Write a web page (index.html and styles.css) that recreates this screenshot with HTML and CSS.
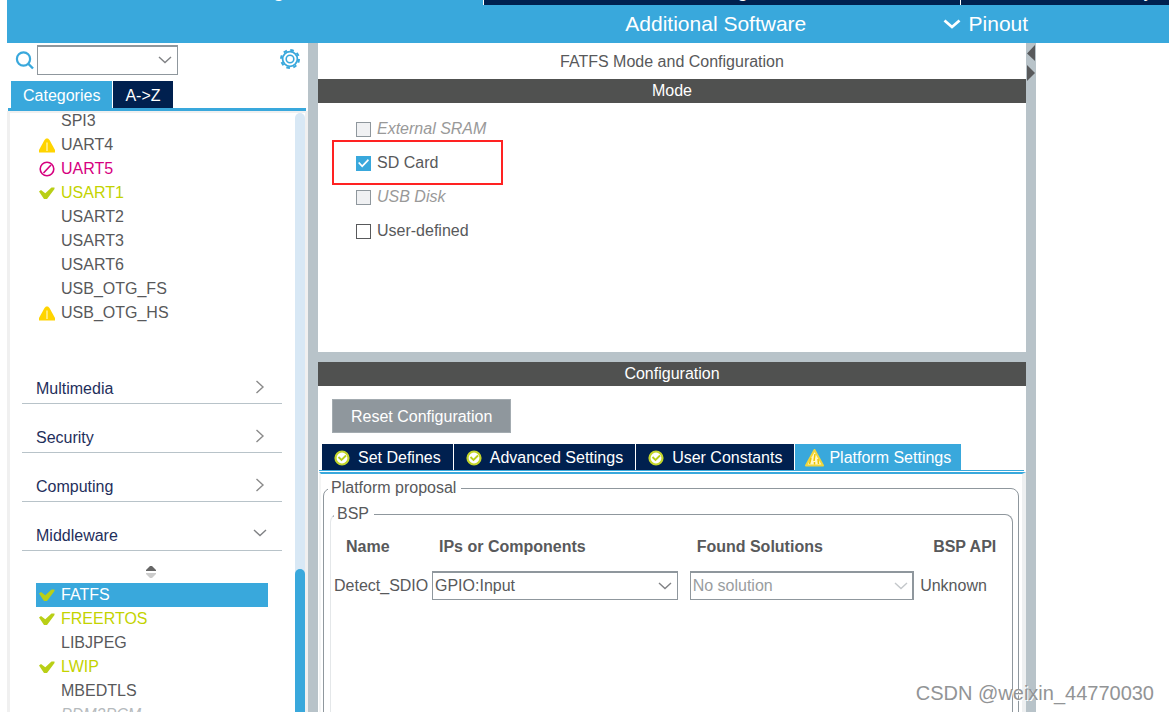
FILE: index.html
```html
<!DOCTYPE html>
<html lang="en">
<head>
<meta charset="utf-8">
<title>FATFS Mode and Configuration</title>
<link rel="stylesheet" href="styles.css">
</head>
<body>
<svg class="defs" aria-hidden="true">
  <symbol id="warn" viewBox="0 0 16 15"><path d="M7 0.500H9L10.500 2 L16 12 V14.500 H0 V12 L5.500 2Z" fill="#ffd400"/><path d="M8 4.500V13" stroke="#fff3a8" stroke-width="1.400"/></symbol>
  <symbol id="tick" viewBox="0 0 16 13"><path d="M0 4.500 L2 3 L6.300 6.300 L12.500 0.500 H15.500 V2 L8 12 H5Z" fill="#b9cf16"/></symbol>
  <symbol id="deny" viewBox="0 0 16 16"><circle cx="8" cy="8" r="6.800" fill="none" stroke="#d6007f" stroke-width="1.600"/><path d="M12 4 L4.500 12" stroke="#d6007f" stroke-width="1.600"/></symbol>
  <symbol id="right" viewBox="0 0 10 14"><path d="M1.500 1 L8 7 L1.500 13" fill="none" stroke="#8a8a8a" stroke-width="1.400"/></symbol>
  <symbol id="down" viewBox="0 0 14 8"><path d="M1 1 L7 6.500 L13 1" fill="none" stroke="currentColor" stroke-width="1.400"/></symbol>
  <symbol id="ok" viewBox="0 0 16 16"><circle cx="8" cy="8" r="6.500" fill="#fff" stroke="#c3d52a" stroke-width="2.200"/><path d="M4.500 7 L7.500 10 L12 5.500" fill="none" stroke="#b9cf16" stroke-width="1.800"/></symbol>
</svg>

<div class="views">
  <div class="view view-on"><span>Pinout &amp; Configuration</span></div>
  <div class="view"><span>Clock Configuration</span></div>
  <div class="view view-last"><span>Project Manager</span></div>
</div>
<header class="bar">
  <button class="bar-btn bar-soft" type="button">Additional Software</button>
  <button class="bar-btn bar-pin" type="button">
    <svg width="18" height="12" viewBox="0 0 18 12"><path d="M1.500 2.500 L9 9 L16.500 2.500" fill="none" stroke="#fff" stroke-width="2.800"/></svg>Pinout
  </button>
</header>

<div class="work">
  <aside class="side">
    <div class="search">
      <svg width="20" height="20" viewBox="0 0 20 20"><circle cx="8.500" cy="8" r="6.600" fill="none" stroke="#39a8dc" stroke-width="2.200"/><path d="M13 12.500 L18 17.500" stroke="#39a8dc" stroke-width="2.400"/></svg>
      <div class="pick pick-search">
        <select aria-label="Search"><option></option></select>
        <svg class="caret" width="14" height="8"><use href="#down"/></svg>
      </div>
      <button class="gear" type="button" aria-label="Settings">
        <svg width="22" height="22" viewBox="0 0 22 22" fill="none" stroke="#39a8dc"><circle cx="11" cy="11" r="9" stroke-width="2" stroke-dasharray="3.600 3.469"/><circle cx="11" cy="11" r="7.400" stroke-width="1.800"/><circle cx="11" cy="11" r="3.800" stroke-width="1.600"/></svg>
      </button>
    </div>
    <div class="tabs side-tabs" role="tablist">
      <button class="tab tab-on" type="button" role="tab" aria-selected="true">Categories</button>
      <button class="tab" type="button" role="tab">A-&gt;Z</button>
    </div>
    <div class="tree">
      <div class="tree-body">
        <ul class="items items-top">
          <li><i></i>SPI3</li>
          <li><i><svg width="16" height="15"><use href="#warn"/></svg></i>UART4</li>
          <li class="bad"><i><svg width="16" height="16"><use href="#deny"/></svg></i>UART5</li>
          <li class="good"><i><svg width="16" height="13"><use href="#tick"/></svg></i>USART1</li>
          <li><i></i>USART2</li>
          <li><i></i>USART3</li>
          <li><i></i>USART6</li>
          <li><i></i>USB_OTG_FS</li>
          <li><i><svg width="16" height="15"><use href="#warn"/></svg></i>USB_OTG_HS</li>
        </ul>
        <button class="cat" type="button">Multimedia<svg width="10" height="14"><use href="#right"/></svg></button>
        <button class="cat" type="button">Security<svg width="10" height="14"><use href="#right"/></svg></button>
        <button class="cat" type="button">Computing<svg width="10" height="14"><use href="#right"/></svg></button>
        <button class="cat cat-open" type="button">Middleware<svg width="14" height="8"><use href="#down"/></svg></button>
        <div class="sort"><svg width="10" height="12" viewBox="0 0 10 12"><path d="M0 5V4L4 0H6L10 4V5Z" fill="#666"/><path d="M0 7V8L4 12H6L10 8V7Z" fill="#ccc"/></svg></div>
        <ul class="items">
          <li class="sel"><i><svg width="16" height="13"><use href="#tick"/></svg></i>FATFS</li>
          <li class="good"><i><svg width="16" height="13"><use href="#tick"/></svg></i>FREERTOS</li>
          <li><i></i>LIBJPEG</li>
          <li class="good"><i><svg width="16" height="13"><use href="#tick"/></svg></i>LWIP</li>
          <li><i></i>MBEDTLS</li>
          <li class="off"><i></i>PDM2PCM</li>
        </ul>
      </div>
      <div class="track"><div class="thumb"></div></div>
    </div>
  </aside>

  <div class="split"></div>

  <main class="main">
    <h1 class="title">FATFS Mode and Configuration</h1>
    <h2 class="band">Mode</h2>
    <section class="modes">
      <label class="mode mode-off"><input type="checkbox" disabled>External SRAM</label>
      <label class="mode mode-marked"><input type="checkbox" checked>SD Card</label>
      <label class="mode mode-off"><input type="checkbox" disabled>USB Disk</label>
      <label class="mode"><input type="checkbox">User-defined</label>
    </section>
    <div class="hsplit"></div>
    <h2 class="band">Configuration</h2>
    <section class="config">
      <button class="reset" type="button">Reset Configuration</button>
      <div class="tabs config-tabs" role="tablist">
        <button class="tab" type="button" role="tab"><svg width="16" height="16"><use href="#ok"/></svg>Set Defines</button>
        <button class="tab" type="button" role="tab"><svg width="16" height="16"><use href="#ok"/></svg>Advanced Settings</button>
        <button class="tab" type="button" role="tab"><svg width="16" height="16"><use href="#ok"/></svg>User Constants</button>
        <button class="tab tab-on tab-warn" type="button" role="tab" aria-selected="true"><svg width="19" height="18" viewBox="0 0 19 18"><path d="M9.500 1 L18 16.500 H1Z" fill="#fff7c4" stroke="#f0d63c" stroke-width="2" stroke-linejoin="round"/><path d="M10 5L9 12M9.500 13V15.500M6 9L4.500 15M13 10L13.500 15" stroke="#ecc400" stroke-width="1.500"/></svg>Platform Settings</button>
      </div>
      <div class="pane">
        <fieldset class="group">
          <legend>Platform proposal</legend>
          <fieldset class="group group-in">
            <legend>BSP</legend>
            <table class="bsp">
              <colgroup><col class="c1"><col class="c2"><col class="c3"><col></colgroup>
              <thead><tr><th class="h-name">Name</th><th class="h-mid">IPs or Components</th><th class="h-mid">Found Solutions</th><th class="h-api">BSP API</th></tr></thead>
              <tbody><tr>
                <td>Detect_SDIO</td>
                <td class="cell-ip"><div class="pick"><select aria-label="IPs or Components"><option>GPIO:Input</option></select><svg class="caret" width="14" height="8"><use href="#down"/></svg></div></td>
                <td class="cell-sol"><div class="pick pick-off"><select aria-label="Found Solutions" disabled><option>No solution</option></select><svg class="caret" width="14" height="8"><use href="#down"/></svg></div></td>
                <td>Unknown</td>
              </tr></tbody>
            </table>
          </fieldset>
        </fieldset>
      </div>
    </section>
  </main>

  <div class="split split-right">
    <button type="button" aria-label="Collapse left"><svg width="8" height="16" viewBox="0 0 8 16"><path d="M8 0V16L0 8.500Z" fill="#58595b"/></svg></button>
    <button type="button" aria-label="Collapse right"><svg width="8" height="16" viewBox="0 0 8 16"><path d="M0 0V16L8 8Z" fill="#58595b"/></svg></button>
  </div>
  <div class="canvas"></div>
</div>
<div class="credit">CSDN @weixin_44770030</div>
</body>
</html>
```
FILE: styles.css
```css
* { box-sizing: border-box; }
body {
  margin: 0;
  padding-left: 7px;
  height: 100vh;
  overflow: hidden;
  position: relative;
  display: flex;
  flex-direction: column;
  background: #fff;
  color: #58595b;
  font: 16px/18px "Liberation Sans", Arial, sans-serif;
}
button, select, input { font: inherit; margin: 0; }
button { border: 0; padding: 0; background: none; color: inherit; }
svg { display: block; flex: none; }
.defs { display: none; }

/* top navigation */
.views { display: flex; flex: none; height: 5px; overflow: hidden; background: #39a8dc; }
.view {
  flex: 0 0 41%;
  display: flex;
  justify-content: center;
  align-items: flex-end;
  padding-bottom: 4px;
  background: #00204f;
  border-left: 1px solid #fff;
  color: #fff;
  font-size: 20px;
  line-height: 22px;
  white-space: nowrap;
}
.view-on { background: #39a8dc; border-left: 0; }
.view-last { flex-basis: 39%; }
.bar {
  flex: none;
  height: 38px;
  display: grid;
  grid-template-columns: 42% 38% 1fr;
  background: #39a8dc;
  color: #fff;
}
.bar-btn { font-size: 21px; line-height: 38px; }
.bar-soft { grid-column: 2; }
.bar-pin { display: flex; align-items: center; gap: 8px; padding-left: 6px; }

.work {
  flex: 1;
  min-height: 0;
  display: grid;
  grid-template-columns: 301px 10px minmax(0, 708fr) 10px minmax(0, 133fr);
  grid-template-rows: minmax(0, 1fr);
}
.split { background: #b8c3c9; }
.split-right { display: flex; flex-direction: column; align-items: center; gap: 4px; padding-top: 2px; }

/* category sidebar */
.side { display: flex; flex-direction: column; min-height: 0; }
.search { display: flex; align-items: flex-start; height: 38px; padding: 2px 7px 0 8px; gap: 2px; flex: none; }
.search > svg { margin-top: 6px; }
.gear { margin: 3px 0 0 auto; }
.pick { display: grid; align-items: center; color: #808285; }
.pick select, .pick .caret { grid-area: 1 / 1; }
.pick select {
  appearance: none;
  width: 100%;
  height: 29px;
  padding: 0 2px;
  border: 1px solid #8f979d;
  border-top-width: 2px;
  border-radius: 0;
  background: #fff;
  color: #58595b;
  opacity: 1;
}
.pick .caret { justify-self: end; margin-right: 6px; pointer-events: none; }
.pick-search { width: 141px; }
.pick-search select { height: 30px; }
.pick-off { color: #c4c8cb; }
.pick-off select { color: #999da0; border-right-width: 2px; }

.tabs { display: flex; gap: 1px; flex: none; }
.tab {
  display: flex;
  align-items: center;
  gap: 8px;
  height: 27px;
  padding: 2px 12px 0;
  background: #00204f;
  color: #fff;
  white-space: nowrap;
}
.tab-on { background: #39a8dc; }
.side-tabs { margin: 0 2px 0 1px; padding-left: 3px; border-bottom: 3px solid #39a8dc; }

.tree {
  flex: 1;
  min-height: 0;
  display: flex;
  overflow: hidden;
  border: 3px solid #f0f0f0;
  border-top-width: 2px;
  border-bottom: 0;
}
.tree-body { flex: 1; min-width: 0; overflow: hidden; }
.track { width: 10px; background: #d8e8f5; border-radius: 5px 5px 0 0; padding-top: 456px; display: flex; }
.thumb { flex: 1; background: #39a8dc; border-radius: 5px 5px 0 0; }
.items { list-style: none; margin: 0 27px 0 26px; padding: 0; }
.items-top { margin-top: -4px; margin-bottom: 30px; }
.items li { display: flex; align-items: center; height: 24px; padding-left: 3px; }
.items i { width: 22px; flex: none; }
.items .good { color: #c3d300; }
.items .bad { color: #d6007f; }
.items .sel { background: #39a8dc; color: #fff; }
.items .off { color: #b5babd; font-style: italic; }
.cat {
  display: flex;
  justify-content: space-between;
  align-items: center;
  width: calc(100% - 25px);
  height: 49px;
  margin-left: 12px;
  padding: 19px 17px 0 14px;
  border-bottom: 1px solid #b8c3c9;
  color: #1f2f5c;
}
.cat svg { margin-bottom: 4px; color: #808285; }
.cat-open { padding-right: 15px; }
.cat-open svg { margin-bottom: 6px; }
.sort { height: 32px; display: flex; justify-content: center; align-items: center; padding: 10px 3px 0 0; }

/* main panel */
.main { display: flex; flex-direction: column; min-height: 0; overflow: hidden; }
.title { margin: 0; padding-top: 1px; font-size: 16px; font-weight: 400; line-height: 35px; text-align: center; }
.band {
  margin: 0;
  background: #505150;
  color: #fff;
  font-size: 16px;
  font-weight: 400;
  line-height: 24px;
  text-align: center;
}
.modes { height: 249px; flex: none; padding: 9px 38px; }
.mode { display: flex; align-items: center; width: fit-content; height: 34px; gap: 6px; position: relative; }
.mode-off { font-style: italic; color: #999; }
.mode input {
  appearance: none;
  width: 15px;
  height: 15px;
  border: 1px solid #58595b;
  background: #fff;
}
.mode input:disabled { border-color: #8f979d; background: #f0f1f3; }
.mode input:checked { border-color: #39a8dc; background: #39a8dc; }
.mode input:checked::before {
  content: "";
  display: block;
  height: 13px;
  background: #fff;
  clip-path: polygon(8% 50%, 18% 42%, 40% 66%, 84% 20%, 92% 30%, 40% 84%);
}
.mode-marked::after {
  content: "";
  position: absolute;
  left: -24px;
  top: -6px;
  width: 167px;
  height: 41px;
  border: 2px solid #f22;
}
.hsplit { height: 10px; flex: none; background: #b8c3c9; }
.config { flex: 1; min-height: 0; display: flex; flex-direction: column; }
.reset {
  align-self: flex-start;
  flex: none;
  height: 34px;
  margin: 13px 14px 11px;
  padding: 1px 18px 0;
  background: #8f979d;
  border: 1px solid #a3abb0;
  color: #fff;
}
.config-tabs { margin: 0 2px 0 1px; padding-left: 3px; border-bottom: 1px solid #39a8dc; }
.config-tabs .tab { height: 26px; }
.config-tabs .tab-warn { gap: 5px; padding: 2px 10px 0; }
.pane {
  flex: 1;
  min-height: 0;
  display: flex;
  margin: 1px 0 0 1px;
  padding: 5px 3px 0 2px;
  border: 2px solid #39a8dc;
  border-left-color: #f4f5f5;
  border-right: 4px solid #eef0f1;
  border-bottom: 0;
  overflow: hidden;
}
.group {
  flex: 1;
  min-width: 0;
  margin: 0 0 -12px;
  padding: 0 5px 0 4px;
  border: 1px solid #8f979d;
  border-radius: 8px;
}
.group legend { padding: 0 5px 0 3px; }
.group-in { margin: 8px 0 0 2px; height: 100%; padding: 0 0 0 3px; border-left-color: #e4e7e9; }
.bsp { width: 100%; border-collapse: collapse; }
.bsp th, .bsp td { padding: 0; text-align: left; white-space: nowrap; }
.bsp th { height: 48px; }
.bsp .c1 { width: 98px; }
.bsp .c2 { width: 38%; }
.bsp .c3 { width: 34%; }
.bsp .h-name { padding-left: 12px; }
.bsp .h-mid { padding-left: 7px; }
.bsp .h-api { padding-left: 13px; }
.bsp .cell-ip { padding-right: 12px; }
.bsp .cell-sol { padding-right: 6px; }

.credit {
  position: absolute;
  right: 15px;
  bottom: 8px;
  color: #929496;
  font-size: 20px;
  line-height: 22px;
  text-shadow: 1px 1px 0 #fff;
}
```
